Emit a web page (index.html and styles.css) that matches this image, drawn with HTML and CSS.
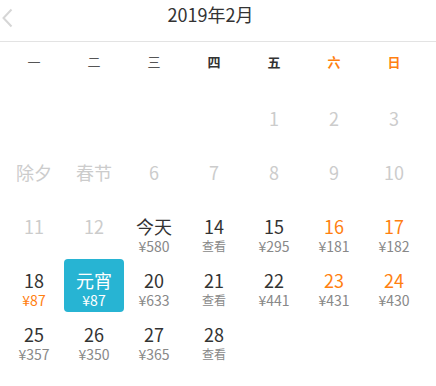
FILE: index.html
```html
<!DOCTYPE html>
<html lang="zh-CN">
<head>
<meta charset="utf-8">
<title>2019年2月</title>
<link rel="stylesheet" href="styles.css">
</head>
<body>
<div class="header">
  <div class="back">
    <svg width="12" height="20" viewBox="0 0 12 20"><path d="M10.5 1.5 L2.5 10 L10.5 18.5" fill="none" stroke="#d6d6d6" stroke-width="2"/></svg>
  </div>
  <div class="title">2019年2月</div>
  <div></div>
</div>
<div class="weekdays">
  <div class="wd">一</div>
  <div class="wd">二</div>
  <div class="wd">三</div>
  <div class="wd strong">四</div>
  <div class="wd strong">五</div>
  <div class="wd strong weekend">六</div>
  <div class="wd strong weekend">日</div>
</div>
<div class="grid">
  <div class="cell"></div>
  <div class="cell"></div>
  <div class="cell"></div>
  <div class="cell"></div>
  <div class="cell off"><div class="num">1</div></div>
  <div class="cell off"><div class="num">2</div></div>
  <div class="cell off"><div class="num">3</div></div>

  <div class="cell off"><div class="num">除夕</div></div>
  <div class="cell off"><div class="num">春节</div></div>
  <div class="cell off"><div class="num">6</div></div>
  <div class="cell off"><div class="num">7</div></div>
  <div class="cell off"><div class="num">8</div></div>
  <div class="cell off"><div class="num">9</div></div>
  <div class="cell off"><div class="num">10</div></div>

  <div class="cell off"><div class="num">11</div></div>
  <div class="cell off"><div class="num">12</div></div>
  <div class="cell"><div class="num">今天</div><div class="price">¥580</div></div>
  <div class="cell"><div class="num">14</div><div class="price look">查看</div></div>
  <div class="cell"><div class="num">15</div><div class="price">¥295</div></div>
  <div class="cell orange"><div class="num">16</div><div class="price">¥181</div></div>
  <div class="cell orange"><div class="num">17</div><div class="price">¥182</div></div>

  <div class="cell"><div class="num">18</div><div class="price low">¥87</div></div>
  <div class="cell selected"><div class="num">元宵</div><div class="price">¥87</div></div>
  <div class="cell"><div class="num">20</div><div class="price">¥633</div></div>
  <div class="cell"><div class="num">21</div><div class="price look">查看</div></div>
  <div class="cell"><div class="num">22</div><div class="price">¥441</div></div>
  <div class="cell orange"><div class="num">23</div><div class="price">¥431</div></div>
  <div class="cell orange"><div class="num">24</div><div class="price">¥430</div></div>

  <div class="cell"><div class="num">25</div><div class="price">¥357</div></div>
  <div class="cell"><div class="num">26</div><div class="price">¥350</div></div>
  <div class="cell"><div class="num">27</div><div class="price">¥365</div></div>
  <div class="cell"><div class="num">28</div><div class="price look">查看</div></div>
</div>
</body>
</html>
```
FILE: styles.css
```css
html, body {
  margin: 0;
  padding: 0;
  background: #fff;
}
body {
  font-family: "Noto Sans CJK SC", "Noto Sans", sans-serif;
  color: #333;
  width: 436px;
}
.header {
  display: grid;
  grid-template-columns: 1fr auto 1fr;
  align-items: center;
  padding: 0 16px 0 1px;
  border-bottom: 1px solid #e3e3e3;
  box-sizing: border-box;
  height: 42px;
}
.back {
  display: flex;
  align-items: center;
  height: 20px;
  margin-top: -6px;
}
.back svg {
  display: block;
}
.title {
  font-size: 18px;
  line-height: 24px;
  color: #333;
  margin-top: -13px;
}
.weekdays {
  display: grid;
  grid-template-columns: repeat(7, 60px);
  margin-left: 4px;
  height: 40px;
  margin-bottom: 15px;
}
.wd {
  text-align: center;
  font-size: 13px;
  line-height: 40px;
  color: #555;
}
.wd.strong {
  font-weight: 700;
  color: #333;
}
.wd.weekend {
  color: #ff8010;
}
.grid {
  display: grid;
  grid-template-columns: repeat(7, 60px);
  grid-auto-rows: 53px;
  row-gap: 1px;
  margin-left: 4px;
}
.cell {
  text-align: center;
  padding-top: 10px;
  box-sizing: border-box;
  border-radius: 4px;
}
.num {
  font-size: 18px;
  line-height: 22px;
  color: #333;
}
.price {
  font-size: 14px;
  line-height: 18px;
  color: #888;
}
.price.look {
  font-size: 12px;
}
.off .num {
  color: #cccccc;
}
.orange .num {
  color: #ff8010;
}
.price.low {
  color: #ff8010;
}
.selected {
  background: #27b4d3;
}
.selected .num,
.selected .price {
  color: #fff;
}
```
